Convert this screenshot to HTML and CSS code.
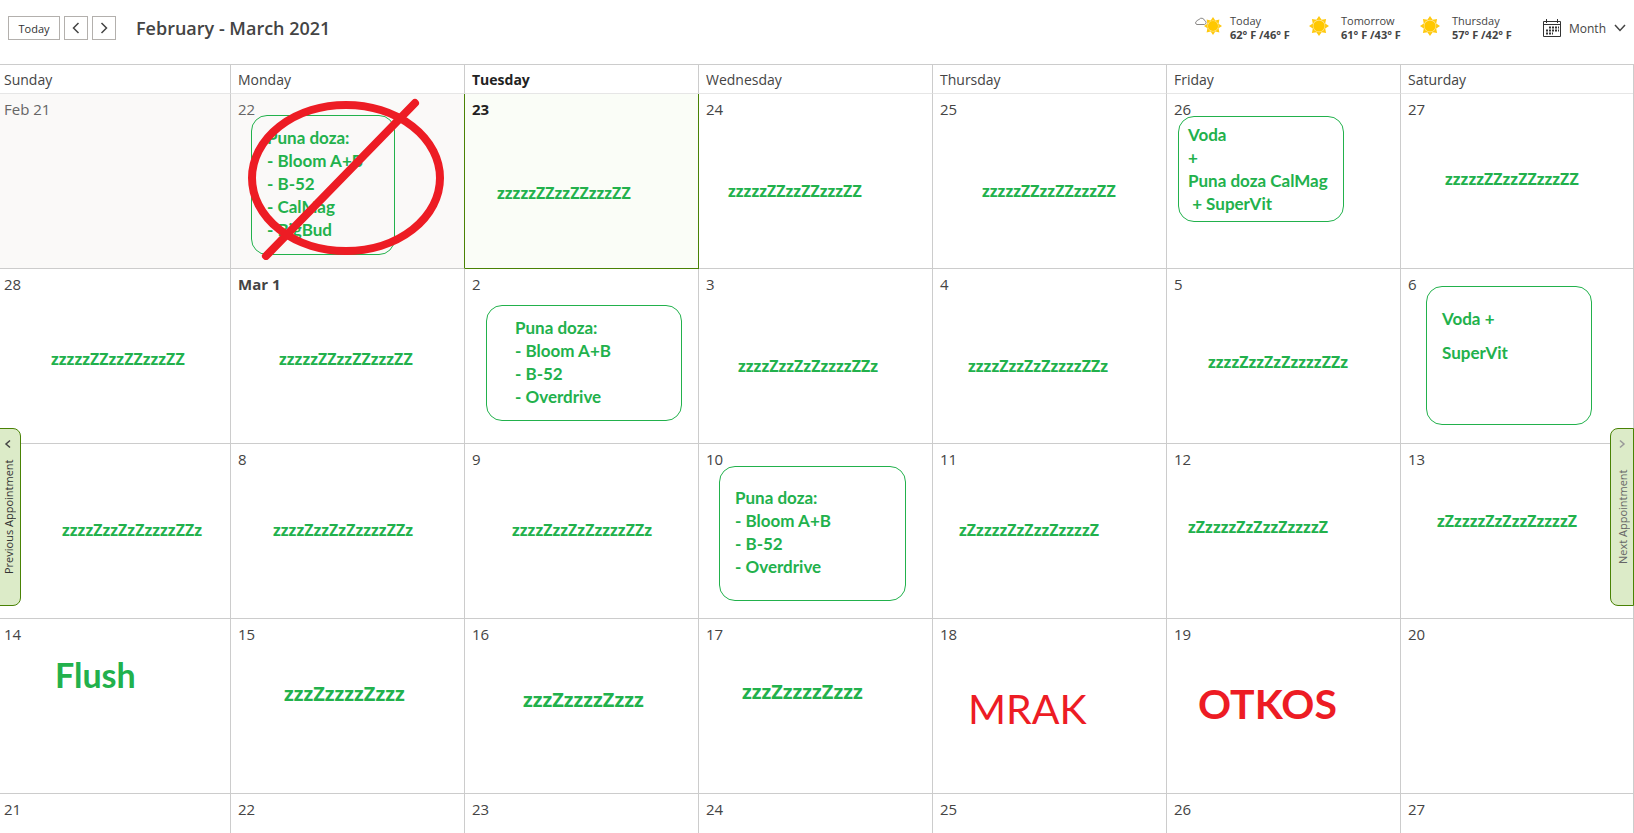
FILE: index.html
```html
<!DOCTYPE html>
<html lang="en">
<head>
    <meta charset="UTF-8">
    <meta name="viewport" content="width=device-width, initial-scale=1.0">
    <title>Calendar - February - March 2021</title>
    <link rel="stylesheet" href="styles.css">
</head>
<body>
    <!-- shapes shared by the toolbar icons -->
    <svg class="sprite" aria-hidden="true">
        <symbol id="sun" viewBox="-10 -10 20 20">
            <path fill="#ffc90e" d="M0-10L2.6-6.2L7.1-7.1L6.2-2.6L10 0L6.2 2.6L7.1 7.1L2.6 6.2L0 10L-2.6 6.2L-7.1 7.1L-6.2 2.6L-10 0L-6.2-2.6L-7.1-7.1L-2.6-6.2Z"/>
            <circle r="6.2" fill="#ffe9a0"/>
            <circle r="5.6" fill="#ffc800"/>
        </symbol>
    </svg>

    <header class="toolbar">
        <div class="nav">
            <button class="btn btn-today">Today</button>
            <button class="btn btn-arrow" aria-label="Previous month">
                <svg width="12" height="12" viewBox="0 0 12 12"><path d="M8.5 1L3.5 6L8.5 11"/></svg>
            </button>
            <button class="btn btn-arrow" aria-label="Next month">
                <svg width="12" height="12" viewBox="0 0 12 12"><path d="M3.5 1L8.5 6L3.5 11"/></svg>
            </button>
        </div>
        <h1>February - March 2021</h1>

        <ul class="weather">
            <li>
                <svg width="28" height="20" viewBox="0 0 28 20">
                    <use href="#sun" x="10" y="1" width="18" height="18"/>
                    <path d="M3 8.5H10.5A2 2 0 0 0 10.5 4.6A3 3 0 0 0 5 3.6A2.4 2.4 0 0 0 2.8 5.2A1.7 1.7 0 0 0 3 8.5Z" fill="#fff" stroke="#8a8886"/>
                </svg>
                <p>Today<b>62° F /46° F</b></p>
            </li>
            <li>
                <svg width="28" height="20" viewBox="0 0 28 20"><use href="#sun" x="4" y="0" width="20" height="20"/></svg>
                <p>Tomorrow<b>61° F /43° F</b></p>
            </li>
            <li>
                <svg width="28" height="20" viewBox="0 0 28 20"><use href="#sun" x="4" y="0" width="20" height="20"/></svg>
                <p>Thursday<b>57° F /42° F</b></p>
            </li>
        </ul>

        <div class="view">
            <svg width="18" height="18" viewBox="0 0 18 18" aria-hidden="true">
                <path d="M.5 2.5H17.5V17.5H.5ZM.5 5.5H17.5M3.5 0V4M14.5 0V4" fill="none" stroke="#333"/>
                <path d="M6 8.5H16M3 11.5H16M3 14.5H10" fill="none" stroke="#333" stroke-width="2" stroke-dasharray="2 1"/>
            </svg>
            <select aria-label="View">
                <option>Month</option>
                <option>Week</option>
                <option>Day</option>
            </select>
            <svg class="chevron" width="12" height="8" viewBox="0 0 12 8"><path d="M1 1L6 6.5L11 1"/></svg>
        </div>
    </header>

    <main class="calendar">
        <table>
            <thead>
                <tr>
                    <th>Sunday</th>
                    <th>Monday</th>
                    <th class="strong">Tuesday</th>
                    <th>Wednesday</th>
                    <th>Thursday</th>
                    <th>Friday</th>
                    <th>Saturday</th>
                </tr>
            </thead>
            <tbody>
                <tr>
                    <td class="past">Feb 21</td>
                    <td class="past yesterday">22
                        <div class="note box feb22">Puna doza:<br>- Bloom A+B<br>- B-52<br>- CalMag<br>- BigBud</div>
                        <svg class="crossed" width="204" height="164" viewBox="0 0 204 164">
                            <ellipse cx="102" cy="82" rx="94" ry="73"/>
                            <path d="M171 7L22 160"/>
                        </svg>
                    </td>
                    <td class="today">23<div class="note zzz feb23">zzzzzZZzzZZzzzZZ</div></td>
                    <td>24<div class="note zzz feb24">zzzzzZZzzZZzzzZZ</div></td>
                    <td>25<div class="note zzz feb25">zzzzzZZzzZZzzzZZ</div></td>
                    <td>26
                        <div class="note box feb26">Voda<br>+<br>Puna doza CalMag<br>&nbsp;+ SuperVit</div>
                    </td>
                    <td>27<div class="note zzz feb27">zzzzzZZzzZZzzzZZ</div></td>
                </tr>
                <tr>
                    <td>28<div class="note zzz feb28">zzzzzZZzzZZzzzZZ</div></td>
                    <td><b>Mar 1</b><div class="note zzz mar1">zzzzzZZzzZZzzzZZ</div></td>
                    <td>2
                        <div class="note box mar2">Puna doza:<br>- Bloom A+B<br>- B-52<br>- Overdrive</div>
                    </td>
                    <td>3<div class="note zzz mar3">zzzzZzzZzZzzzzZZz</div></td>
                    <td>4<div class="note zzz mar4">zzzzZzzZzZzzzzZZz</div></td>
                    <td>5<div class="note zzz mar5">zzzzZzzZzZzzzzZZz</div></td>
                    <td>6
                        <div class="note box mar6">Voda +<br>SuperVit</div>
                    </td>
                </tr>
                <tr>
                    <td>7<div class="note zzz mar7">zzzzZzzZzZzzzzZZz</div></td>
                    <td>8<div class="note zzz mar8">zzzzZzzZzZzzzzZZz</div></td>
                    <td>9<div class="note zzz mar9">zzzzZzzZzZzzzzZZz</div></td>
                    <td>10
                        <div class="note box mar10">Puna doza:<br>- Bloom A+B<br>- B-52<br>- Overdrive</div>
                    </td>
                    <td>11<div class="note zzz mar11">zZzzzzZzZzzZzzzzZ</div></td>
                    <td>12<div class="note zzz mar12">zZzzzzZzZzzZzzzzZ</div></td>
                    <td>13<div class="note zzz mar13">zZzzzzZzZzzZzzzzZ</div></td>
                </tr>
                <tr>
                    <td>14<div class="note flush">Flush</div></td>
                    <td>15<div class="note zzz big mar15">zzzZzzzzZzzz</div></td>
                    <td>16<div class="note zzz big mar16">zzzZzzzzZzzz</div></td>
                    <td>17<div class="note zzz big mar17">zzzZzzzzZzzz</div></td>
                    <td>18<div class="note red mrak">MRAK</div></td>
                    <td>19<div class="note red otkos">OTKOS</div></td>
                    <td>20</td>
                </tr>
                <tr>
                    <td>21</td>
                    <td>22</td>
                    <td>23</td>
                    <td>24</td>
                    <td>25</td>
                    <td>26</td>
                    <td>27</td>
                </tr>
            </tbody>
        </table>

        <button class="tab tab-prev">
            <svg width="8" height="10" viewBox="0 0 8 10"><path d="M6 1.5L2 5L6 8.5"/></svg>
            <span>Previous Appointment</span>
        </button>
        <button class="tab tab-next">
            <svg width="8" height="10" viewBox="0 0 8 10"><path d="M2 1.5L6 5L2 8.5"/></svg>
            <span>Next Appointment</span>
        </button>
    </main>
</body>
</html>
```

FILE: styles.css
```css
* {
    box-sizing: border-box;
}

body {
    margin: 0;
    height: 100vh;
    display: flex;
    flex-direction: column;
    overflow: hidden;
    font-family: "Open Sans", "Noto Sans", sans-serif;
    font-size: 14px;
    color: #444;
    background-color: #fff;
}

.sprite {
    position: absolute;
    width: 0;
    height: 0;
}

/* Toolbar */
.toolbar {
    display: flex;
    align-items: flex-start;
    height: 64px;
    flex-shrink: 0;
    padding: 16px 8px 0;
}

.nav {
    display: flex;
    gap: 4px;
}

.btn {
    height: 24px;
    padding: 0;
    border: 1px solid #b3b0ad;
    background-color: #fff;
    font-family: inherit;
    font-size: 11px;
    color: #333;
}

.btn-today {
    width: 52px;
}

.btn-arrow {
    display: flex;
    align-items: center;
    justify-content: center;
    width: 24px;
}

.btn svg,
.chevron,
.tab svg {
    fill: none;
    stroke: #444;
    stroke-width: 1.5;
}

h1 {
    margin: 0 0 0 20px;
    font-size: 18px;
    font-weight: 600;
    line-height: 24px;
}

.weather {
    display: flex;
    margin: 0 0 0 auto;
    padding: 0;
    list-style: none;
}

.weather li {
    display: flex;
    gap: 8px;
    width: 111px;
}

.weather p {
    margin: -2px 0 0;
    font-size: 11px;
    line-height: 14px;
    white-space: nowrap;
}

.weather b {
    display: block;
}

.view {
    position: relative;
    display: flex;
    align-items: center;
    gap: 8px;
    height: 24px;
    margin-left: 16px;
}

.view select {
    appearance: none;
    width: 57px;
    padding: 0;
    border: none;
    background: none;
    font-family: inherit;
    font-size: 12px;
    color: #444;
}

.chevron {
    position: absolute;
    right: 0;
    pointer-events: none;
}

/* Month grid */
.calendar {
    position: relative;
    flex: 1;
    overflow: hidden;
}

.calendar::after {
    content: "";
    position: absolute;
    top: 0;
    right: 0;
    bottom: 0;
    border-right: 1px solid #ccc;
}

/* the first column is cut slightly by the window edge */
table {
    width: calc(100% + 4px);
    margin-left: -3px;
    table-layout: fixed;
    border-spacing: 0;
    border-top: 1px solid #ccc;
}

th {
    height: 29px;
    padding: 0 7px;
    border-right: 1px solid #ccc;
    border-bottom: 1px solid #e6e6e6;
    font-weight: normal;
    text-align: left;
}

.strong {
    font-weight: bold;
    color: #222;
}

td {
    position: relative;
    height: 175px;
    padding: 5px 7px;
    border-right: 1px solid #ccc;
    border-bottom: 1px solid #ccc;
    font-size: 15px;
    line-height: 20px;
    vertical-align: top;
}

.past {
    background-color: #faf9f8;
    color: #666;
}

.yesterday {
    border-right-color: #498205;
}

.today {
    border-color: #498205;
    background-color: #fafdf7;
    font-weight: bold;
    color: #222;
}

/* Notes pinned freely on the days */
.note {
    position: absolute;
    font-family: Lato, sans-serif;
    font-size: 17px;
    font-weight: bold;
    line-height: 23px;
    white-space: nowrap;
    color: #22b14c;
}

.box {
    border: 1px solid #22b14c;
    border-radius: 16px;
}

.zzz {
    font-family: "Open Sans", sans-serif;
    font-size: 16px;
}

.big {
    font-size: 20px;
}

.red {
    font-size: 41px;
    line-height: 50px;
    color: #ed1c24;
}

.crossed {
    position: absolute;
    left: 13px;
    top: 2px;
    fill: none;
    stroke: #ed1c24;
    stroke-width: 8;
    stroke-linecap: round;
}

.feb22 { left: 20px; top: 21px; width: 144px; height: 140px; padding: 10px 15px; }
.feb23 { left: 32px; top: 88px; }
.feb24 { left: 29px; top: 86px; }
.feb25 { left: 49px; top: 86px; }
.feb26 { left: 11px; top: 22px; width: 166px; height: 106px; padding: 6px 9px; }
.feb27 { left: 44px; top: 74px; }

.feb28 { left: 54px; top: 79px; }
.mar1 { left: 48px; top: 79px; }
.mar2 { left: 21px; top: 36px; width: 196px; height: 116px; padding: 10px 28px; }
.mar3 { left: 39px; top: 86px; }
.mar4 { left: 35px; top: 86px; }
.mar5 { left: 41px; top: 82px; }
.mar6 { left: 25px; top: 17px; width: 166px; height: 139px; padding: 15px; line-height: 34px; }

.mar7 { left: 65px; top: 75px; }
.mar8 { left: 42px; top: 75px; }
.mar9 { left: 47px; top: 75px; }
.mar10 { left: 20px; top: 22px; width: 187px; height: 135px; padding: 19px 15px; }
.mar11 { left: 26px; top: 75px; }
.mar12 { left: 21px; top: 72px; }
.mar13 { left: 36px; top: 66px; }

.flush { left: 58px; top: 36px; font-size: 34px; line-height: 40px; }
.mar15 { left: 53px; top: 63px; }
.mar16 { left: 58px; top: 69px; }
.mar17 { left: 43px; top: 61px; }
.mrak { left: 35px; top: 65px; font-weight: normal; }
.otkos { left: 31px; top: 60px; }

/* Appointment tabs on both sides */
.tab {
    position: absolute;
    top: 364px;
    z-index: 1;
    display: flex;
    flex-direction: column;
    align-items: center;
    width: 24px;
    height: 178px;
    padding: 10px 0 20px;
    border: 1px solid #498205;
    background-color: #dcebc8;
    font-family: inherit;
    font-size: 11px;
    color: #333;
}

.tab span {
    flex: 1;
    writing-mode: vertical-rl;
    transform: rotate(180deg);
    text-align: center;
}

.tab-prev {
    left: -5px;
    width: 26px;
    border-radius: 0 8px 8px 0;
}

.tab-next {
    right: 0;
    border-radius: 8px 0 0 8px;
    color: #666;
}

.tab-next svg {
    stroke: #999;
}
```
